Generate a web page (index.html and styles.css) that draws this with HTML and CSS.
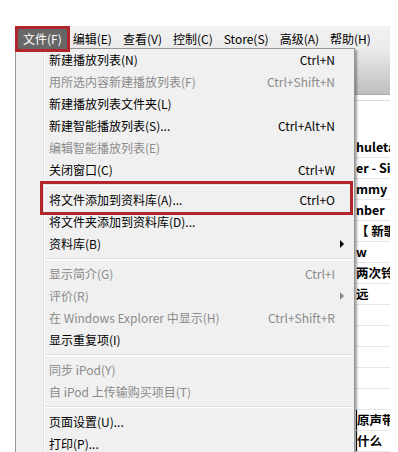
FILE: index.html
```html
<html>
  <head>
    <title> iTunes 文件菜单 </title>
    <link rel="stylesheet" href="styles.css">
  </head>
  <body>
    <div class="window">
      <div class="menubar">
        <span class="top open">文件(F)</span>
        <span class="top">编辑(E)</span>
        <span class="top">查看(V)</span>
        <span class="top">控制(C)</span>
        <span class="top">Store(S)</span>
        <span class="top">高级(A)</span>
        <span class="top">帮助(H)</span>
      </div>
      <div class="toolbar"></div>
      <div class="listhead"></div>
      <div class="songs">
        <div class="song"><span class="cols"></span><span class="title">huleta</span></div>
        <div class="song"><span class="cols"></span><span class="title">er - Sin</span></div>
        <div class="song"><span class="cols"></span><span class="title">mmy N</span></div>
        <div class="song"><span class="cols"></span><span class="title">nber</span></div>
        <div class="song"><span class="cols"></span><span class="title">【 新歌</span></div>
        <div class="song"><span class="cols"></span><span class="title">w</span></div>
        <div class="song"><span class="cols"></span><span class="title">两次铃</span></div>
        <div class="song"><span class="cols"></span><span class="title">远</span></div>
        <div class="song"><span class="cols"></span><span class="title"></span></div>
        <div class="song"><span class="cols"></span><span class="title"></span></div>
        <div class="song"><span class="cols"></span><span class="title"></span></div>
        <div class="song"><span class="cols"></span><span class="title"></span></div>
        <div class="song"><span class="cols"></span><span class="title"></span></div>
        <div class="song edge"><span class="cols"></span><span class="title">原声带</span></div>
        <div class="song edge"><span class="cols"></span><span class="title">什么</span></div>
      </div>
    </div>

    <!-- the open 文件 menu, drawn over the window -->
    <div class="menu">
      <div class="item"><span>新建播放列表(N)</span><span class="key">Ctrl+N</span></div>
      <div class="item off"><span>用所选内容新建播放列表(F)</span><span class="key">Ctrl+Shift+N</span></div>
      <div class="item"><span>新建播放列表文件夹(L)</span></div>
      <div class="item"><span>新建智能播放列表(S)...</span><span class="key">Ctrl+Alt+N</span></div>
      <div class="item off"><span>编辑智能播放列表(E)</span></div>
      <div class="item"><span>关闭窗口(C)</span><span class="key">Ctrl+W</span></div>
      <div class="sep"></div>
      <div class="item"><span>将文件添加到资料库(A)...</span><span class="key">Ctrl+O</span></div>
      <div class="item"><span>将文件夹添加到资料库(D)...</span></div>
      <div class="item"><span>资料库(B)</span><span class="arrow"></span></div>
      <div class="sep"></div>
      <div class="item off"><span>显示简介(G)</span><span class="key">Ctrl+I</span></div>
      <div class="item off"><span>评价(R)</span><span class="arrow"></span></div>
      <div class="item off"><span>在 Windows Explorer 中显示(H)</span><span class="key">Ctrl+Shift+R</span></div>
      <div class="item"><span>显示重复项(I)</span></div>
      <div class="sep"></div>
      <div class="item off"><span>同步 iPod(Y)</span></div>
      <div class="item off"><span>自 iPod 上传输购买项目(T)</span></div>
      <div class="sep"></div>
      <div class="item"><span>页面设置(U)...</span></div>
      <div class="item"><span>打印(P)...</span></div>
      <div class="mark"></div>
    </div>
  </body>
</html>
```

FILE: styles.css
```css
* { box-sizing: border-box; }
body {
  margin: 0;
  height: 452px;
  overflow: hidden;
  background: #fff;
  color: #000;
  font: 12px/1 "Noto Sans CJK SC", "Microsoft YaHei", sans-serif;
}
.window {
  margin: 26px 0 0 15px;
  width: 375px;
}
/* BEGIN menu bar */
.menubar {
  display: flex;
  gap: 1px;
  height: 22px;
  padding: 3px 0 0 3px;
  background: linear-gradient(#f3f3f3, #ebebeb);
}
.top {
  height: 20px;
  line-height: 20px;
  padding: 0 5px;
  white-space: nowrap;
}
.top.open {
  position: relative;
  z-index: 3;
  background: #676767;
  color: #fff;
  outline: 3px solid #b0262b;
}
/* END menu bar */
.toolbar {
  height: 47px;
  background: linear-gradient(#ebebeb, #bfbfbf);
  border-bottom: 1px solid #a9a9a9;
}
.listhead {
  height: 42px;
  border-top: 1px solid #fff;
  background: linear-gradient(#fff 4px, #dcdcdc 4px 5px, #fff 5px);
}
/* BEGIN song list */
.song {
  display: flex;
  height: 21px;
  border-bottom: 1px solid #e6e6e6;
}
.cols { width: 341px; flex: none; }
.title {
  flex: 1;
  overflow: hidden;
  white-space: nowrap;
  font-weight: 700;
  font-size: 12.5px;
  line-height: 20px;
}
.song.edge .title { border-left: 1px solid #111; }
/* END song list */
/* BEGIN drop-down */
.menu {
  position: absolute;
  z-index: 2;
  left: 15px;
  top: 48px;
  width: 340px;
  height: 420px;
  border: 1px solid #979797;
  background: linear-gradient(to right, transparent 27px, #e2e3e3 27px 28px, #fff 28px 29px, transparent 29px), #f0f0f0;
  box-shadow: 2px 2px 2px rgba(0,0,0,0.35);
}
.item {
  display: grid;
  grid-template-columns: 1fr auto 13px;
  align-items: center;
  height: 22px;
  padding: 0 6px 0 33px;
  white-space: nowrap;
}
.item.off { color: #8b8b8b; }
.key { grid-column: 2; }
.arrow {
  grid-column: 3;
  justify-self: start;
  margin-left: 5px;
  width: 0;
  height: 0;
  border-left: 4px solid #000;
  border-top: 4px solid transparent;
  border-bottom: 4px solid transparent;
}
.item.off .arrow { border-left-color: #8b8b8b; }
.sep {
  height: 8px;
  margin: 0 2px 0 29px;
  background: linear-gradient(transparent 3px, #e0e0e0 3px 4px, #fff 4px 5px, transparent 5px);
}
/* red annotation box */
.mark {
  position: absolute;
  left: 24px;
  top: 132px;
  width: 313px;
  height: 34px;
  border: 3px solid #b0262b;
}
/* END drop-down */
```
